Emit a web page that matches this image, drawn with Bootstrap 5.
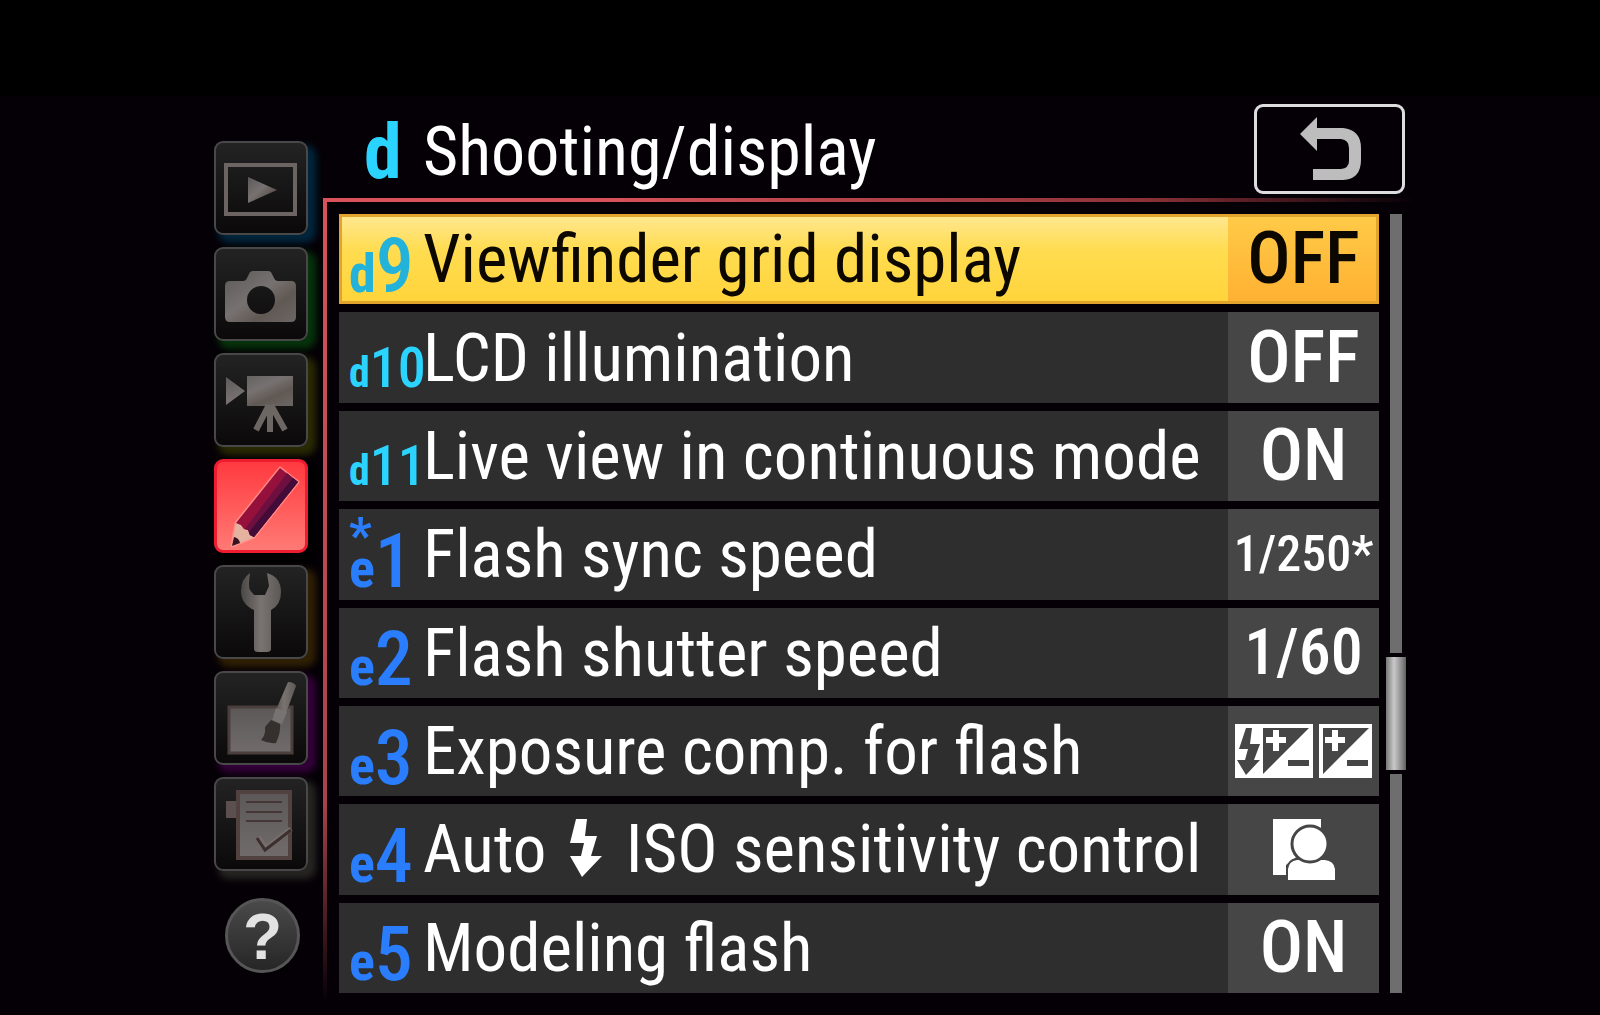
<!doctype html>
<html lang="en">
<head>
<meta charset="utf-8">
<meta name="viewport" content="width=device-width, initial-scale=1">
<title>Custom settings: Shooting/display</title>
<link href="https://cdn.jsdelivr.net/npm/bootstrap@5.3.0/dist/css/bootstrap.min.css" rel="stylesheet">
<style>
  body { background: linear-gradient(#000 96px, #050006 96px); font-family: "Roboto Condensed", Roboto, sans-serif; color: #fff; }
  button { border: 0; padding: 0; color: inherit; background: none; text-align: left; }
  .lcd { padding: 0 12.125% 0 13.375%; }

  .tabs { width: 94px; padding-top: 141px; gap: 12px; }
  .tab-key { --glow: #000; width: 94px; height: 94px; border: 2px solid #484848; border-radius: 9px;
    background: linear-gradient(#232323, #0b0909); box-shadow: 6px 6px 7px 2px var(--glow); }
  .tab-key svg { display: block; margin: -2px; }
  .glow-blue { --glow: #00263c; } .glow-green { --glow: #06330c; } .glow-olive { --glow: #2a2a04; }
  .glow-amber { --glow: #302004; } .glow-violet { --glow: #330039; } .glow-gray { --glow: #262522; }
  .tab-key.current { border: 3px solid #ee1c30; background: linear-gradient(#ff3a40, #ff7a74); }
  .tab-key.current svg { margin: -3px; }
  .help-key { width: 75px; height: 75px; margin: 15px 0 0 11px; border: 3px solid #565656; border-radius: 50%;
    background: linear-gradient(#4a4a4a, #262626); color: #e2e2e2; font: 700 64px/73px "Liberation Sans", sans-serif; text-align: center; }

  .menu { margin-left: 15px; padding-bottom: 22px; min-width: 0; }
  .menu-head { padding: 104px 1px 4px 41px; }
  .head-letter { width: 59px; padding-top: 6px; font-size: 76px; line-height: 84px; font-weight: 700; color: #2bd4ff; }
  .head-title { padding-top: 6px; font-size: 68px; line-height: 84px; font-weight: 400; }
  .back-key { width: 151px; height: 90px; border: 3px solid #ddd; border-radius: 9px; }

  .frame { position: relative; padding: 16px 0 0 16px; }
  .frame::before { content: ""; position: absolute; left: 0; top: 0; right: -10px; height: 4px;
    background: linear-gradient(90deg, #d9525a 25%, #8c3238 75%, transparent); }
  .frame::after { content: ""; position: absolute; left: 0; top: 0; bottom: -10px; width: 4px;
    background: linear-gradient(#d9525a, #a8424a 75%, transparent); }

  .rows { gap: 8px; margin-right: 7px; min-width: 0; }
  .setting { flex: 1 1 90px; background: #2e2e2e; white-space: nowrap; }
  .code { width: 84px; padding: 14px 0 0 10px; color: #2a7dfd; line-height: 68px; font-size: 76px; font-weight: 500; position: relative; }
  .code b { font-size: 54px; line-height: 1; font-weight: 700; }
  .code.cyan { color: #2bd4ff; }
  .code.two { padding-top: 20px; line-height: 60px; font-size: 56px; }
  .code.two b { font-size: 42px; }
  .code .star { position: absolute; left: 10px; top: -3px; font-size: 50px; line-height: 52px; font-weight: 700; }
  .name { font-size: 67px; line-height: 80px; }
  .name svg { margin: 0 8px 0 24px; vertical-align: -5px; }
  .val { width: 151px; background: #464646; font-size: 72px; line-height: 80px; font-weight: 500; }
  .val.mid { font-size: 64px; } .val.tight { font-size: 50px; }
  .setting.picked { background: linear-gradient(#ffe894, #ffdc50 40%, #ffd43a); color: #0c0800; outline: 3px solid #e2a42c; outline-offset: -3px; }
  .picked .val { background: linear-gradient(#ffcb48, #ffb032); }
  .picked .code.cyan { color: #22b2da; }

  .scroller { width: 20px; gap: 4px; }
  .track { width: 12px; background: #6e6e6e; flex: 219 1 0; }
  .track.above { flex-grow: 438; }
  .thumb { width: 20px; height: 113px; background: linear-gradient(90deg, #777, #c9c9c9 40%, #888 80%, #606060); }
</style>
</head>
<body>
<svg width="0" height="0" class="position-absolute" aria-hidden="true">
  <defs>
    <linearGradient id="dim" x1="0" y1="0" x2="1" y2="1"><stop offset="0" stop-color="#5c5858"/><stop offset=".45" stop-color="#777271"/><stop offset=".7" stop-color="#605853"/><stop offset="1" stop-color="#6c6766"/></linearGradient>
    <linearGradient id="steel" x1="0" x2="1" y1="0" y2="0"><stop offset="0" stop-color="#4a4745"/><stop offset=".5" stop-color="#7a7471"/><stop offset="1" stop-color="#5c5855"/></linearGradient>
    <linearGradient id="paper" x1="0" y1="0" x2="0" y2="1"><stop offset="0" stop-color="#5c5858"/><stop offset="1" stop-color="#716c6b"/></linearGradient>
  </defs>
</svg>
<div class="lcd min-vh-100 d-flex">
  <nav class="tabs d-flex flex-column flex-shrink-0" aria-label="Menus">
    <button class="tab-key glow-blue" aria-label="Playback menu"><svg width="94" height="94" viewBox="0 0 94 94"><rect x="12" y="24" width="69" height="49" fill="none" stroke="#6c6463" stroke-width="4"/><path d="M34 36v26l29-13z" fill="url(#dim)"/></svg></button>
    <button class="tab-key glow-green" aria-label="Photo shooting menu"><svg width="94" height="94" viewBox="0 0 94 94"><path fill-rule="evenodd" fill="url(#dim)" d="M16 34h13q3 0 4-3l2-4q1-3 4-3h15q3 0 4 3l2 4q1 3 4 3h13q5 0 5 5v31q0 5-5 5H16q-5 0-5-5V39q0-5 5-5zM61 53a14 14 0 1 0-28 0a14 14 0 1 0 28 0z"/></svg></button>
    <button class="tab-key glow-olive" aria-label="Movie shooting menu"><svg width="94" height="94" viewBox="0 0 94 94"><path d="M12 24v28l19-14zM33 23h46v30H33z" fill="url(#dim)"/><path d="M55 52 42 77M56 52v27M57 52l14 25" stroke="#6d6764" stroke-width="6"/></svg></button>
    <button class="tab-key current" aria-label="Custom settings menu"><svg width="94" height="94" viewBox="0 0 94 94"><path d="M66 9l18 14-44 55-22 9 4-23z" fill="none" stroke="#ff9f98" stroke-width="3" stroke-linejoin="round" opacity=".7"/><path d="M22 64l5 2 3 4 4 1 2 5 4 2-22 9z" fill="#e3b3a0"/><path d="M20 78q5 1 6 6l-8 3z" fill="#3a1220"/><path d="M66 9l18 14-44 55-4-2-2-5-4-1-3-4-5-2z" fill="#96103c"/><path d="M73 14l11 9-44 55-4-2-2-5-3-1z" fill="#6d1040"/><path d="M79 19l5 4-44 55-4-2-1-3z" fill="#430b38"/></svg></button>
    <button class="tab-key glow-amber" aria-label="Setup menu"><svg width="94" height="94" viewBox="0 0 94 94"><path d="M36 8Q27 14 27 26q0 13 13 19v39q0 3 4 3h9q4 0 4-3V45q10-5 10-18 0-15-14-19l2 13-4 9h-11l-4-5q-2-3 0-17z" fill="url(#steel)"/></svg></button>
    <button class="tab-key glow-violet" aria-label="Retouch menu"><svg width="94" height="94" viewBox="0 0 94 94"><rect x="15" y="36" width="63" height="46" fill="url(#paper)" stroke="#4a3f3c" stroke-width="3"/><path d="M74 11q6 0 8 4L68 53l-10-5z" fill="url(#steel)"/><path d="M62 37l11 4-5 12-10-4z" fill="#777371"/><path d="M57 49l9 4q1 8-4 19-7 1-15-3 5-5 4-13z" fill="#35302d"/></svg></button>
    <button class="tab-key glow-gray" aria-label="My menu"><svg width="94" height="94" viewBox="0 0 94 94"><path d="M12 24h12v17H12z" fill="#5b504f"/><rect x="24" y="15" width="52" height="66" fill="url(#paper)" stroke="#51423f" stroke-width="4"/><path d="M32 25h36M32 35h36M32 44h36" stroke="#443735" stroke-width="2"/><path d="M44 60l8 11 25-19" fill="none" stroke="#776d6a" stroke-width="5"/><path d="M43 61l8 12 26-20" fill="none" stroke="#3c302e" stroke-width="3"/></svg></button>
    <button class="help-key" aria-label="Help">?</button>
  </nav>

  <main class="menu flex-fill d-flex flex-column">
    <header class="menu-head d-flex">
      <span class="head-letter">d</span>
      <h1 class="head-title m-0 flex-fill">Shooting/display</h1>
      <button class="back-key" aria-label="Back"><svg class="d-block" width="145" height="84" viewBox="0 0 145 84"><path d="M43 27 60 10v11h26q18 2 18 20v12q0 19-18 20H56V62h28q8-1 8-8V41q0-8-8-9H60v12z" fill="#bdbdbd"/></svg></button>
    </header>
    <section class="frame flex-fill d-flex">
      <div class="rows flex-fill d-flex flex-column">
        <button class="setting picked d-flex align-items-stretch"><span class="code cyan align-self-center"><b>d</b>9</span><span class="name flex-fill align-self-center">Viewfinder grid display</span><span class="val d-flex align-items-center justify-content-center">OFF</span></button>
        <button class="setting d-flex align-items-stretch"><span class="code cyan two align-self-center"><b>d</b>10</span><span class="name flex-fill align-self-center">LCD illumination</span><span class="val d-flex align-items-center justify-content-center">OFF</span></button>
        <button class="setting d-flex align-items-stretch"><span class="code cyan two align-self-center"><b>d</b>11</span><span class="name flex-fill align-self-center">Live view in continuous mode</span><span class="val d-flex align-items-center justify-content-center">ON</span></button>
        <button class="setting d-flex align-items-stretch"><span class="code align-self-center"><span class="star">*</span><b>e</b>1</span><span class="name flex-fill align-self-center">Flash sync speed</span><span class="val tight d-flex align-items-center justify-content-center">1/250*</span></button>
        <button class="setting d-flex align-items-stretch"><span class="code align-self-center"><b>e</b>2</span><span class="name flex-fill align-self-center">Flash shutter speed</span><span class="val mid d-flex align-items-center justify-content-center">1/60</span></button>
        <button class="setting d-flex align-items-stretch"><span class="code align-self-center"><b>e</b>3</span><span class="name flex-fill align-self-center">Exposure comp. for flash</span><span class="val d-flex align-items-center justify-content-center"><svg width="137" height="54" viewBox="0 0 137 54" role="img" aria-label="Flash and exposure compensation"><path d="M0 0h78v54H0zM84 0h53v54H84z" fill="#fff"/><path d="M11 4h6l-2 16h10l-6 16h6L11 51 2 36h8l3-11H4zM28 4h46L28 50zM53 36h21v6H53zM88 4h46L88 50zM112 36h21v6h-21z" fill="#464646"/><path d="M38 6h6v7h7v6h-7v8h-6v-8h-7v-6h7zM97 6h6v7h7v6h-7v8h-6v-8h-7v-6h7z" fill="#fff"/></svg></span></button>
        <button class="setting d-flex align-items-stretch"><span class="code align-self-center"><b>e</b>4</span><span class="name flex-fill align-self-center">Auto<svg width="32" height="58" viewBox="0 0 32 58" role="img" aria-label="flash"><path d="M6 0h11l-2 17h12l-6 20h11L12 58 0 37h11l3-13H0z" fill="#fff"/></svg> ISO sensitivity control</span><span class="val d-flex align-items-center justify-content-center"><svg width="62" height="61" viewBox="0 0 62 61" role="img" aria-label="Subject and background"><path d="M0 0h48v10L26 36 13 46v10H0z" fill="#fff"/><path d="M15 61V50q1-8 9-9h5q8 3 17 0h6q9 1 10 9v11z" fill="#fff" stroke="#464646" stroke-width="4" paint-order="stroke"/><circle cx="37" cy="25" r="18" fill="#fff" stroke="#464646" stroke-width="3"/></svg></span></button>
        <button class="setting d-flex align-items-stretch"><span class="code align-self-center"><b>e</b>5</span><span class="name flex-fill align-self-center">Modeling flash</span><span class="val d-flex align-items-center justify-content-center">ON</span></button>
      </div>
      <div class="scroller d-flex flex-column align-items-center flex-shrink-0">
        <div class="track above"></div><div class="thumb"></div><div class="track"></div>
      </div>
    </section>
  </main>
</div>
<script src="https://cdn.jsdelivr.net/npm/bootstrap@5.3.0/dist/js/bootstrap.bundle.min.js"></script>
</body>
</html>
